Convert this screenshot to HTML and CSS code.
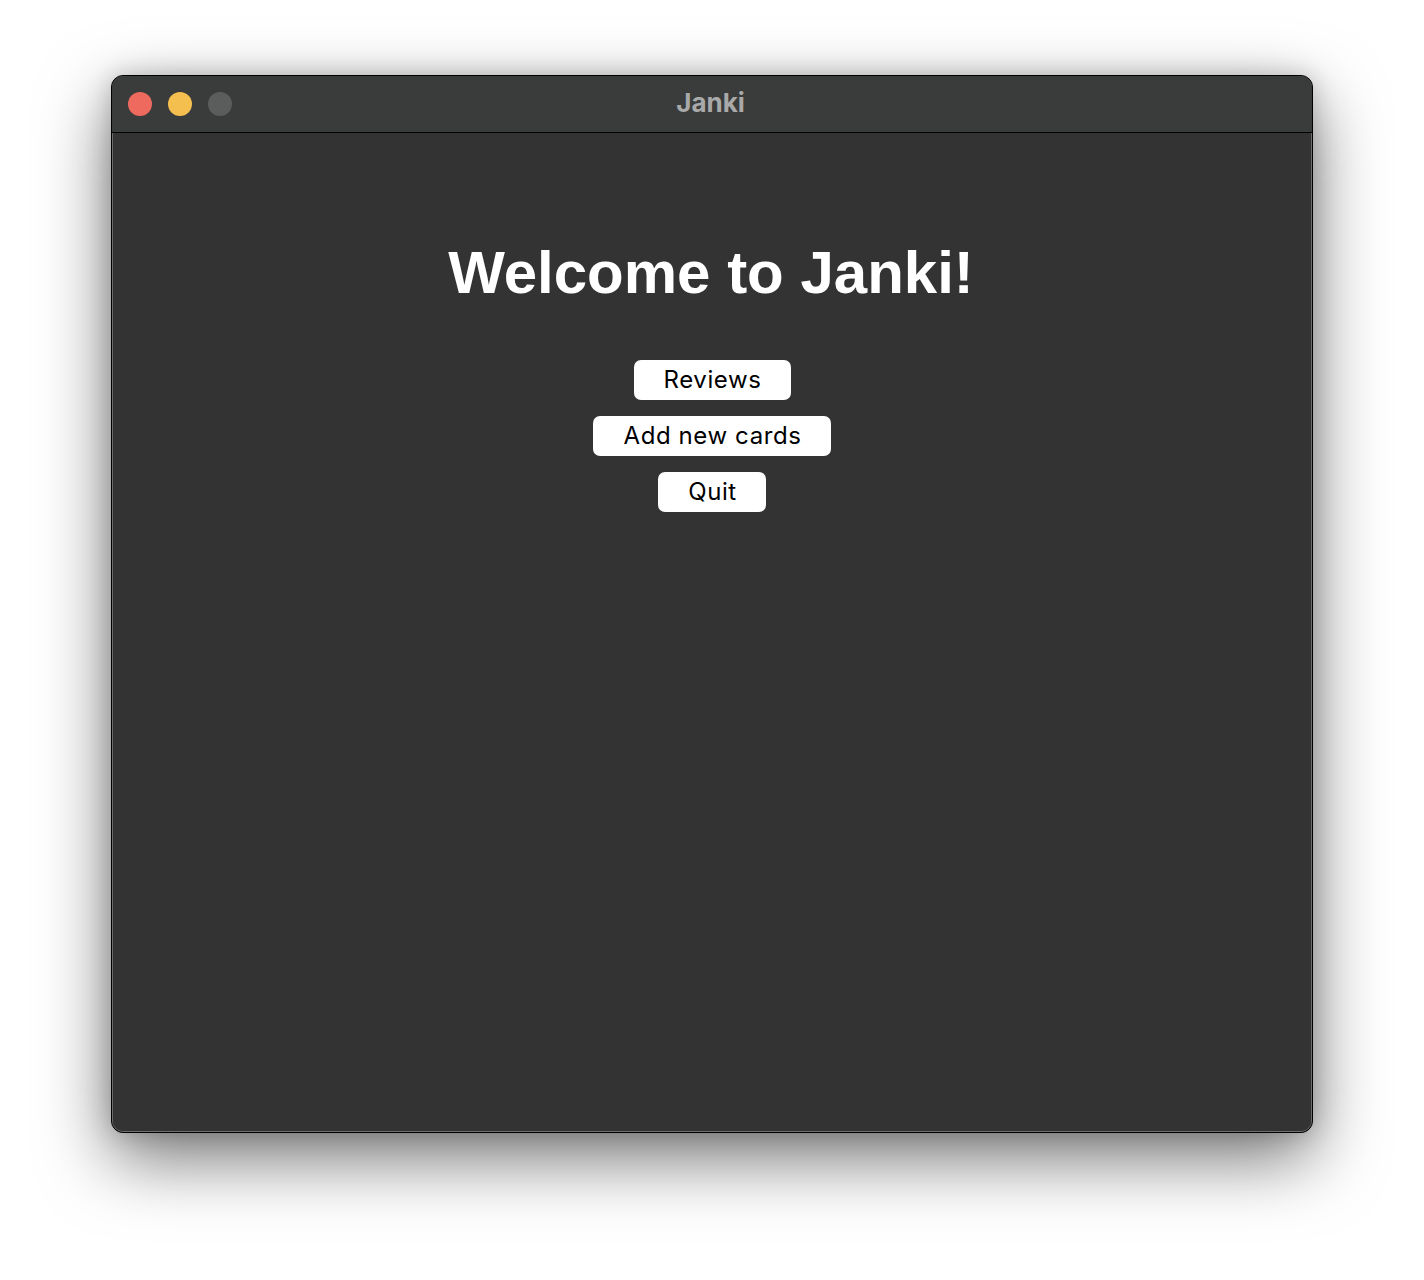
FILE: index.html
```html
<!DOCTYPE html>
<html lang="en">
<head>
<meta charset="utf-8">
<title>Janki</title>
<link rel="stylesheet" href="styles.css">
</head>
<body>
<div class="window">
  <div class="titlebar">
    <div class="lights">
      <span class="light red"></span>
      <span class="light yellow"></span>
      <span class="light gray"></span>
    </div>
    <div class="title">Janki</div>
  </div>
  <div class="content">
    <h1 class="heading">Welcome to Janki!</h1>
    <div class="buttons">
      <button class="btn">Reviews</button>
      <button class="btn">Add new cards</button>
      <button class="btn">Quit</button>
    </div>
  </div>
</div>
</body>
</html>
```
FILE: styles.css
```css
html, body {
  margin: 0;
  background: #ffffff;
}
body {
  padding: 75px 111px 0 111px;
  height: 1280px;
  box-sizing: border-box;
  overflow: hidden;
}
.window {
  height: 1058px;
  box-sizing: border-box;
  border: 1px solid #000;
  border-radius: 12px;
  overflow: hidden;
  display: flex;
  flex-direction: column;
  background: #333333;
  box-shadow: inset 0 0 0 1px rgba(255,255,255,0.18), 0 25px 70px rgba(0,0,0,0.55), 0 0 24px rgba(0,0,0,0.18);
}
.titlebar {
  position: relative;
  height: 56px;
  flex: 0 0 56px;
  background: #3a3c3c;
  border-bottom: 1px solid #000;
  display: flex;
  align-items: center;
  justify-content: center;
}
.lights {
  position: absolute;
  left: 16px;
  top: 16px;
  display: flex;
  gap: 16px;
}
.light {
  width: 24px;
  height: 24px;
  border-radius: 50%;
  display: block;
}
.red { background: #ee6a5f; }
.yellow { background: #f5bf4f; }
.gray { background: #5b5c5c; }
.title {
  font-family: Inter, "Liberation Sans", sans-serif;
  font-weight: 700;
  font-size: 26px;
  color: #a9a9a9;
  margin-top: -3px;
  padding-right: 3px;
}
.content {
  flex: 1;
  display: flex;
  flex-direction: column;
  align-items: center;
  box-shadow: inset 1px 0 0 rgba(255,255,255,0.12), inset -1px 0 0 rgba(255,255,255,0.12), inset 0 -1px 0 rgba(255,255,255,0.15);
}
.heading {
  margin: 110px 0 0 0;
  font-family: "Liberation Sans", Arial, sans-serif;
  font-weight: 700;
  font-size: 60px;
  line-height: 60px;
  color: #ffffff;
  padding-right: 2px;
}
.buttons {
  margin-top: 57px;
  display: flex;
  flex-direction: column;
  align-items: center;
  gap: 16px;
}
.btn {
  height: 40px;
  padding: 0 29px 0 30px;
  border: none;
  border-radius: 7px;
  background: #ffffff;
  color: #000;
  font-family: Inter, "Liberation Sans", sans-serif;
  font-size: 24px;
  letter-spacing: 0.6px;
  line-height: 40px;
}
```
